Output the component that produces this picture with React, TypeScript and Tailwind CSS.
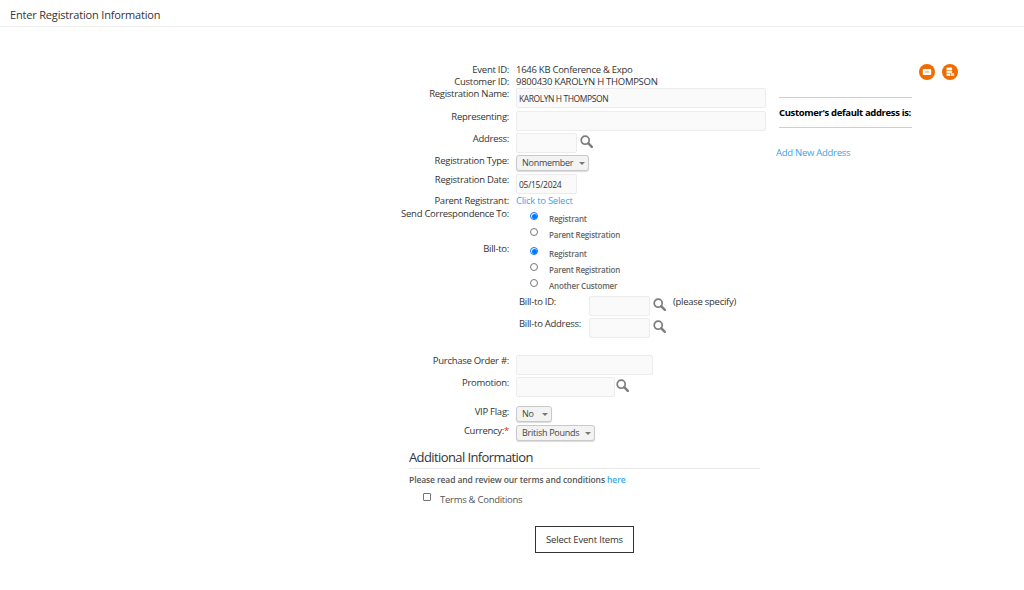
import React from 'react';

const inputCls = 'block h-[20px] rounded-[2px] border border-[#ececec] bg-[#fafafa] px-[2px] text-[8.5px] text-[#333] outline-none';

const Row: React.FC<{ label?: React.ReactNode; className: string; children?: React.ReactNode }> = ({ label, className, children }) => (
  <div className={`flex ${className}`}>
    <div className="w-[119px] shrink-0 text-right leading-[12px] whitespace-nowrap">{label}</div>
    <div className="ml-[7px] flex min-w-0 items-start">{children}</div>
  </div>
);

const Lookup: React.FC<{ className?: string }> = ({ className = 'ml-[3px]' }) => (
  <svg viewBox="0 0 13 13" className={`mt-[2px] h-[13px] w-[13px] ${className}`} fill="none" stroke="#7d7d7d">
    <circle cx="5.2" cy="5.2" r="4" strokeWidth="1.7" />
    <path d="M8.2 8.2 L11.8 11.8" strokeWidth="2.4" strokeLinecap="round" />
  </svg>
);

const Select: React.FC<{ text: string; className: string }> = ({ text, className }) => (
  <div className={`flex h-[16px] items-center justify-between whitespace-nowrap rounded-[3px] border border-[#c9c9c9] bg-[#f3f3f3] pl-[5px] pr-[3px] text-[9px] text-[#444] shadow-[0_1px_1px_rgba(0,0,0,0.15)] ${className}`}>
    <span>{text}</span>
    <span className="h-0 w-0 border-x-[3px] border-t-[3px] border-x-transparent border-t-[#777]" />
  </div>
);

const Radio: React.FC<{ text: string; checked?: boolean }> = ({ text, checked }) => (
  <div className="flex h-[16px] items-start">
    <span className={`ml-[14px] mt-[4px] flex h-[8px] w-[8px] items-center justify-center rounded-full border ${checked ? 'border-[#0075ff]' : 'border-[#767676]'} bg-white`}>
      {checked && <span className="h-[5px] w-[5px] rounded-full bg-[#0075ff]" />}
    </span>
    <span className="ml-[11px] mt-[5px] text-[8px] font-semibold leading-[12px] tracking-[-0.2px] text-[#666]">{text}</span>
  </div>
);

export default function App() {
  return (
    <div className="min-h-[590px] bg-white font-['Open_Sans','Noto_Sans',sans-serif] text-[9.5px] tracking-[-0.27px] text-[#333]">
      <div className="h-[27px] border-b border-[#eeeeee] pl-[10px] pt-[7px] text-[11px] leading-[16px] tracking-[-0.18px] text-[#333]">
        Enter Registration Information
      </div>

      <div className="flex pl-[390px] pt-[37px]">
        <div className="w-[380px] shrink-0">
          <Row label="Event ID:" className="h-[12px]"><span className="leading-[12px]">1646 KB Conference &amp; Expo</span></Row>
          <Row label="Customer ID:" className="h-[12px]"><span className="leading-[12px]">9800430 KAROLYN H THOMPSON</span></Row>
          <Row label="Registration Name:" className="h-[22px]">
            <input readOnly defaultValue="KAROLYN H THOMPSON" className={`${inputCls} w-[250px] tracking-[-0.42px]`} />
          </Row>
          <Row label="Representing:" className="h-[23px] pt-[1px]">
            <input readOnly className={`${inputCls} w-[250px]`} />
          </Row>
          <Row label="Address:" className="h-[22px]">
            <input readOnly className={`${inputCls} w-[61px]`} />
            <Lookup />
          </Row>
          <Row label="Registration Type:" className="h-[19px]"><Select text="Nonmember" className="w-[73px]" /></Row>
          <Row label="Registration Date:" className="h-[21px]">
            <input readOnly defaultValue="05/15/2024" className={`${inputCls} w-[61px]`} />
          </Row>
          <Row label="Parent Registrant:" className="h-[12px]"><span className="leading-[12px] text-[#3aa6e8]">Click to Select</span></Row>
          <Row label="Send Correspondence To:" className="h-[36px] pt-[1px]">
            <div className="flex flex-col">
              <Radio text="Registrant" checked />
              <Radio text="Parent Registration" />
            </div>
          </Row>
          <Row label="Bill-to:" className="h-[53px]">
            <div className="flex flex-col">
              <Radio text="Registrant" checked />
              <Radio text="Parent Registration" />
              <Radio text="Another Customer" />
            </div>
          </Row>
          <div className="flex h-[22px] pl-[129px]">
            <span className="w-[70px] leading-[12px]">Bill-to ID:</span>
            <input readOnly className={`${inputCls} w-[61px]`} />
            <Lookup />
            <span className="ml-[7px] leading-[12px]">(please specify)</span>
          </div>
          <div className="flex h-[22px] pl-[129px]">
            <span className="w-[70px] leading-[12px]">Bill-to Address:</span>
            <input readOnly className={`${inputCls} w-[61px]`} />
            <Lookup />
          </div>
          <Row label="Purchase Order #:" className="mt-[15px] h-[22px]">
            <input readOnly className={`${inputCls} w-[137px]`} />
          </Row>
          <Row label="Promotion:" className="h-[29px]">
            <input readOnly className={`${inputCls} w-[99px]`} />
            <Lookup className="ml-[1px]" />
          </Row>
          <Row label="VIP Flag:" className="h-[19px]"><Select text="No" className="w-[36px]" /></Row>
          <Row label={<>Currency:<span className="text-[#e02020]">*</span></>} className="h-[20px]">
            <Select text="British Pounds" className="w-[79px]" />
          </Row>

          <div className="ml-[19px] w-[351px]">
            <div className="h-[24px] border-b border-[#e8e8e8] text-[13px] leading-[24px] tracking-[-0.6px] text-[#333]">Additional Information</div>
            <p className="mt-[5px] text-[8.5px] font-semibold leading-[12px] tracking-[-0.1px] text-[#555]">
              Please read and review our terms and conditions <span className="text-[#3aa6e8]">here</span>
            </p>
            <div className="mt-[3px] flex items-start pl-[14px]">
              <span className="mt-[4px] h-[8px] w-[8px] rounded-[1px] border border-[#767676] bg-white" />
              <span className="ml-[9px] mt-[5px] leading-[12px] text-[#555]">Terms &amp; Conditions</span>
            </div>
          </div>

          <div className="mt-[20px] pl-[145px]">
            <button className="h-[27px] w-[99px] border border-[#333] bg-white pt-[1px] text-[9.5px] tracking-[-0.2px] text-[#333]">Select Event Items</button>
          </div>
        </div>

        <div className="w-[190px] shrink-0 pl-[6px]">
          <div className="flex justify-end gap-[7px] pr-[2px]">
            <span className="flex h-[16px] w-[16px] items-center justify-center rounded-full bg-[#f06c00]">
              <svg viewBox="0 0 10 10" className="h-[10px] w-[10px]">
                <rect x="0.8" y="2" width="8.4" height="6" rx="0.8" fill="white" />
                <rect x="2.8" y="4.4" width="4.4" height="1.1" fill="#f4a05a" />
              </svg>
            </span>
            <span className="flex h-[16px] w-[16px] items-center justify-center rounded-full bg-[#f06c00]">
              <svg viewBox="0 0 10 10" className="h-[10px] w-[10px]">
                <rect x="1.5" y="0.6" width="5.6" height="2.5" fill="white" />
                <rect x="1.5" y="3.7" width="5.6" height="2.2" fill="white" />
                <rect x="1.5" y="6.5" width="3.8" height="2.4" fill="white" />
                <rect x="5.9" y="6" width="3.2" height="3" rx="0.5" fill="white" opacity="0.75" />
              </svg>
            </span>
          </div>
          <div className="ml-[3px] mt-[17px] w-[133px] border-y border-[#cfcfcf] py-[4px]">
            <div className="h-[21px] whitespace-nowrap text-[9.5px] font-bold leading-[21px] tracking-[-0.36px] text-black">Customer&apos;s default address is:</div>
          </div>
          <div className="mt-[19px] leading-[12px] text-[#3aa6e8]">Add New Address</div>
        </div>
      </div>
    </div>
  );
}
